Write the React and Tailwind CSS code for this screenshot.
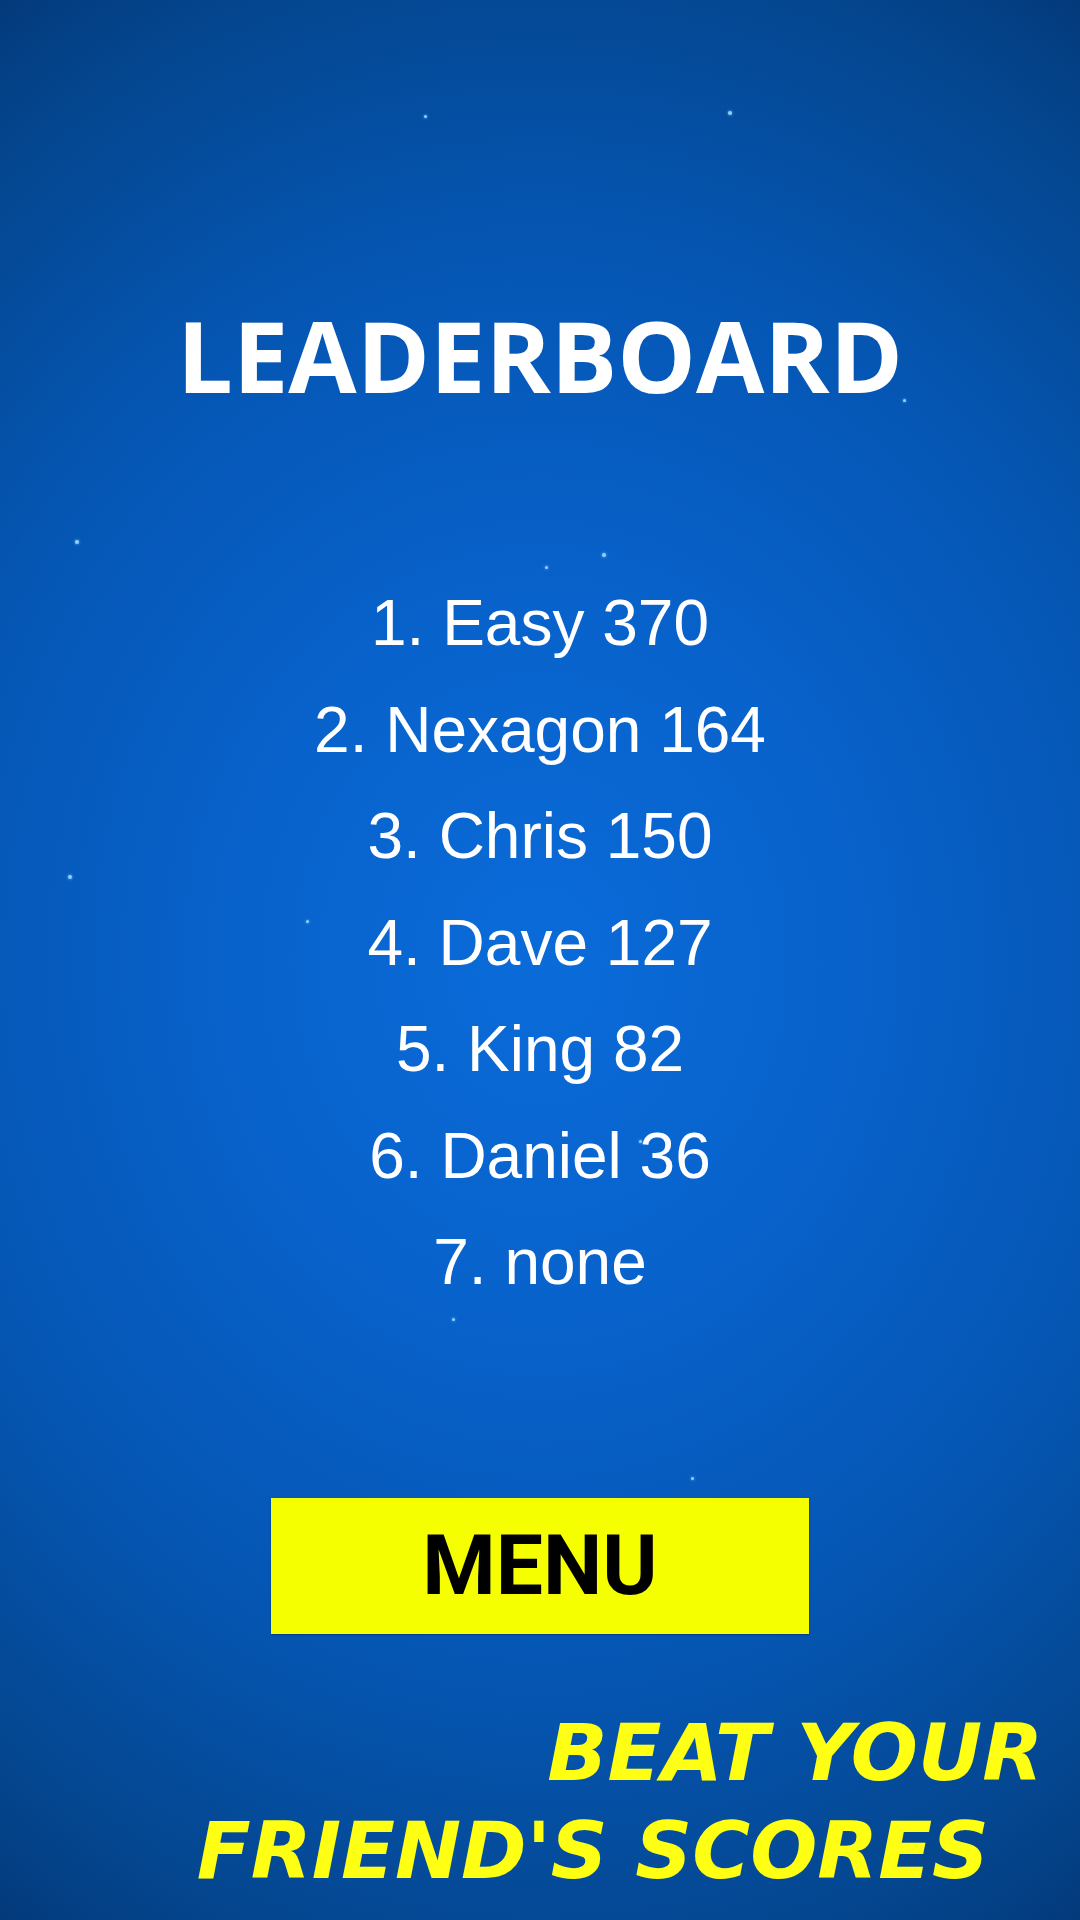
export default function App() {
  const rows = [
    "1. Easy 370",
    "2. Nexagon 164",
    "3. Chris 150",
    "4. Dave 127",
    "5. King 82",
    "6. Daniel 36",
    "7. none",
  ];
  const stars = [
    [425, 116, 3],
    [730, 113, 4],
    [904, 400, 3],
    [77, 542, 4],
    [546, 567, 3],
    [604, 555, 4],
    [70, 877, 4],
    [307, 921, 3],
    [640, 1141, 3],
    [453, 1319, 3],
    [692, 1478, 3],
  ];
  return (
    <div
      className="relative w-[1080px] h-[1920px] overflow-hidden flex flex-col items-center"
      style={{
        background:
          "radial-gradient(ellipse 95% 62% at 50% 50%, #0a6bd9 0%, #0862cb 30%, #0556b3 60%, #04468f 85%, #033675 100%)",
      }}
    >
      {stars.map(([x, y, s], i) => (
        <div
          key={i}
          className="absolute rounded-full bg-[#8fd0ff]"
          style={{ left: x - s / 2, top: y - s / 2, width: s, height: s, boxShadow: "0 0 3px #6cc0ff" }}
        />
      ))}
      <h1 className="mt-[300px] text-white font-bold text-[99px] leading-[110px] font-['Open_Sans',sans-serif]">
        LEADERBOARD
      </h1>
      <div className="mt-[160px] flex flex-col items-center">
        {rows.map((r) => (
          <div
            key={r}
            className="h-[106.5px] flex items-center text-white text-[64px] leading-none font-['Liberation_Sans',Arial,sans-serif]"
          >
            {r}
          </div>
        ))}
      </div>
      <button className="mt-[182px] w-[538px] h-[136px] bg-[#f5ff00] flex items-center justify-center text-black font-bold text-[84px] leading-none font-['Roboto',sans-serif] shadow-[0_1px_2px_rgba(0,0,0,0.3)]">
        MENU
      </button>
      <div className="mt-[70px] w-full flex flex-col items-end text-[#ffff14] font-bold italic text-[79px] leading-[98px] font-['DejaVu_Sans',sans-serif]">
        <div className="pr-[37px]">BEAT YOUR</div>
        <div className="pr-[91px]">FRIEND'S SCORES</div>
      </div>
    </div>
  );
}
